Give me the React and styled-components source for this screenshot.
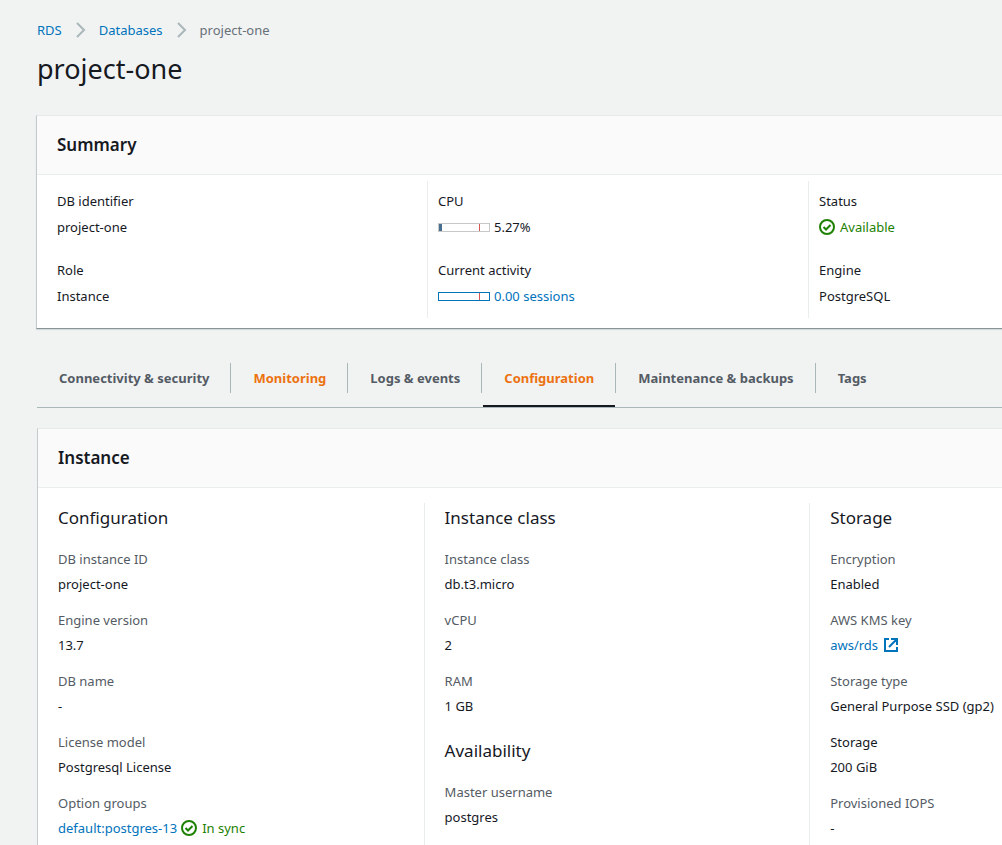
import React from "react";
import styled, { createGlobalStyle, css } from "styled-components";

const color = {
  page: "#f1f3f3",
  text: "#16191f",
  label: "#545b64",
  link: "#0073bb",
  success: "#1d8102",
  accent: "#ec7211",
  rule: "#aab7b8",
  divider: "#eaeded",
};

const GlobalStyle = createGlobalStyle`
  *, *::before, *::after { box-sizing: border-box; }
  body {
    margin: 0;
    background: ${color.page};
    color: ${color.text};
    font-family: "Noto Sans", "Open Sans", sans-serif;
    font-size: 13px;
    line-height: 20px;
    overflow-x: hidden;
  }
  h1, h2, h3, p, dl, dt, dd, ol { margin: 0; padding: 0; }
`;

const Page = styled.main`
  min-height: 100vh;
  padding: 20px 0 0 36px;
  display: flex;
  flex-direction: column;
`;

const Crumbs = styled.ol`
  display: flex;
  align-items: center;
  list-style: none;
  margin-left: 1px;
  li { display: flex; align-items: center; color: #687078; }
`;

const Chevron = styled.svg`
  width: 16px;
  height: 16px;
  margin: 0 10px 0 11px;
  fill: none;
  stroke: ${color.rule};
  stroke-width: 2;
`;

const Link = styled.a`
  color: ${color.link};
  text-decoration: none;
  &:hover { text-decoration: underline; }
`;

const Title = styled.h1`
  margin: 11px 0 28px 1px;
  font-size: 27px;
  line-height: 36px;
  font-weight: 400;
`;

const Panel = styled.section`
  background: #fff;
  border-top: 1px solid #e6e9e9;
  border-left: 1px solid #c3cbcc;
  ${(p) =>
    p.$fill
      ? css`
          flex: 1;
          display: flex;
          flex-direction: column;
          margin: 20px 0 0 1px;
        `
      : css`
          border-bottom: 1px solid #879596;
          box-shadow: 0 1px 1px #d5dbdb;
        `}
`;

const PanelHeader = styled.header`
  padding: 17px 20px;
  background: #fafafa;
  border-bottom: 1px solid ${color.divider};
  h2 { font-size: 17px; line-height: 24px; font-weight: 600; }
`;

const SummaryGrid = styled.div`
  display: grid;
  grid-template-columns: 55fr 55fr 28fr;
  padding: 6px 0 10px 9px;
`;

const SummaryColumn = styled.dl`
  display: flex;
  flex-direction: column;
  gap: 23px;
  min-width: 0;
  padding: 10px 10px 12px;
  border-left: 1px solid ${color.divider};
  &:first-child { border-color: transparent; }
`;

const SummaryItem = styled.div`
  display: grid;
  gap: 6px;
`;

const Value = styled.dd`
  display: flex;
  align-items: center;
  gap: 4px;
  white-space: nowrap;
`;

const Meter = styled.span`
  display: block;
  position: relative;
  width: 52px;
  height: 9px;
  border: 1px solid ${(p) => (p.$linked ? color.link : "#c8c8c8")};
  background: #fff;
  &::after {
    content: "";
    position: absolute;
    top: 0;
    bottom: 0;
    left: 80%;
    width: 1px;
    background: #d9534f;
  }
`;

const MeterFill = styled.span`
  display: block;
  height: 100%;
  background: #486f8f;
`;

const StatusText = styled.span`
  display: inline-flex;
  align-items: center;
  gap: 5px;
  color: ${color.success};
`;

const Icon = styled.svg`
  width: 16px;
  height: 16px;
  flex: none;
  fill: none;
  stroke: currentColor;
  stroke-width: 2;
`;

const ExternalLink = styled(Link)`
  display: inline-flex;
  align-items: center;
  gap: 5px;
`;

const Tabs = styled.div`
  display: flex;
  margin: 34px 0 0 1px;
  border-bottom: 1px solid ${color.rule};
`;

const Tab = styled.button`
  position: relative;
  height: 44px;
  padding: 0 22px 14px;
  border: 0;
  background: none;
  font: inherit;
  font-weight: 700;
  line-height: 30px;
  white-space: nowrap;
  color: ${(p) => (p.$accent ? color.accent : color.label)};
  cursor: pointer;
  &:not(:last-child)::before {
    content: "";
    position: absolute;
    top: 0;
    right: 0;
    width: 1px;
    height: 30px;
    background: ${color.rule};
  }
  &[aria-selected="true"]::after {
    content: "";
    position: absolute;
    left: 1px;
    right: 1px;
    bottom: 0;
    height: 2px;
    background: ${color.text};
  }
`;

const DetailGrid = styled.div`
  flex: 1;
  display: grid;
  grid-template-columns: 2fr 2fr 1fr;
  padding-top: 15px;
`;

const DetailColumn = styled.div`
  display: flex;
  flex-direction: column;
  gap: 23px;
  min-width: 0;
  padding: 3px 0 7px 20px;
  border-left: 1px solid ${color.divider};
  &:first-child { border-left: 0; }
`;

const Group = styled.section`
  h3 { margin-bottom: 19px; font-size: 17px; line-height: 24px; font-weight: 400; }
`;

const Fields = styled.dl`
  display: grid;
  gap: 16px;
`;

const Field = styled.div`
  display: grid;
  gap: 5px;
  dt { color: ${(p) => (p.$strong ? color.text : color.label)}; }
`;

const Separator = () => (
  <Chevron viewBox="0 0 16 16" aria-hidden="true">
    <path d="M4 1l7 7-7 7" />
  </Chevron>
);

const Status = ({ children }) => (
  <StatusText>
    <Icon viewBox="0 0 16 16" aria-hidden="true">
      <circle cx="8" cy="8" r="7" />
      <path d="M4.5 8l2.5 2.5L11.5 6" />
    </Icon>
    {children}
  </StatusText>
);

const UsageMeter = ({ percent, linked }) => (
  <Meter $linked={linked}>
    <MeterFill style={{ width: `${percent}%` }} />
  </Meter>
);

const summary = [
  [
    ["DB identifier", "project-one"],
    ["Role", "Instance"],
  ],
  [
    ["CPU", <><UsageMeter percent={5.27} />5.27%</>],
    ["Current activity", <><UsageMeter percent={0} linked /><Link href="#sessions">0.00 sessions</Link></>],
  ],
  [
    ["Status", <Status>Available</Status>],
    ["Engine", "PostgreSQL"],
  ],
];

const tabs = [
  { name: "Connectivity & security" },
  { name: "Monitoring", accent: true },
  { name: "Logs & events" },
  { name: "Configuration", accent: true, selected: true },
  { name: "Maintenance & backups" },
  { name: "Tags" },
];

const details = [
  [
    {
      title: "Configuration",
      fields: [
        ["DB instance ID", "project-one"],
        ["Engine version", "13.7"],
        ["DB name", "-"],
        ["License model", "Postgresql License"],
        ["Option groups", <><Link href="#option-group">default:postgres-13</Link><Status>In sync</Status></>],
      ],
    },
  ],
  [
    {
      title: "Instance class",
      fields: [
        ["Instance class", "db.t3.micro"],
        ["vCPU", "2"],
        ["RAM", "1 GB"],
      ],
    },
    { title: "Availability", fields: [["Master username", "postgres"]] },
  ],
  [
    {
      title: "Storage",
      fields: [
        ["Encryption", "Enabled"],
        [
          "AWS KMS key",
          <ExternalLink href="#kms">
            aws/rds
            <Icon viewBox="0 0 16 16" aria-hidden="true">
              <path d="M6 2H2v12h12v-4M8 2h6v6M14 2L6 10" />
            </Icon>
          </ExternalLink>,
        ],
        ["Storage type", "General Purpose SSD (gp2)"],
        ["Storage", "200 GiB", true],
        ["Provisioned IOPS", "-"],
      ],
    },
  ],
];

export default function App() {
  return (
    <>
      <GlobalStyle />
      <Page>
        <nav aria-label="Breadcrumb">
          <Crumbs>
            <li><Link href="#rds">RDS</Link><Separator /></li>
            <li><Link href="#databases">Databases</Link><Separator /></li>
            <li aria-current="page">project-one</li>
          </Crumbs>
        </nav>
        <Title>project-one</Title>

        <Panel>
          <PanelHeader><h2>Summary</h2></PanelHeader>
          <SummaryGrid>
            {summary.map((items, i) => (
              <SummaryColumn key={i}>
                {items.map(([label, value]) => (
                  <SummaryItem key={label}>
                    <dt>{label}</dt>
                    <Value>{value}</Value>
                  </SummaryItem>
                ))}
              </SummaryColumn>
            ))}
          </SummaryGrid>
        </Panel>

        <Tabs role="tablist">
          {tabs.map((t) => (
            <Tab key={t.name} type="button" role="tab" aria-selected={!!t.selected} $accent={t.accent}>
              {t.name}
            </Tab>
          ))}
        </Tabs>

        <Panel $fill>
          <PanelHeader><h2>Instance</h2></PanelHeader>
          <DetailGrid>
            {details.map((groups, i) => (
              <DetailColumn key={i}>
                {groups.map((g) => (
                  <Group key={g.title}>
                    <h3>{g.title}</h3>
                    <Fields>
                      {g.fields.map(([label, value, strong]) => (
                        <Field key={label} $strong={strong}>
                          <dt>{label}</dt>
                          <Value>{value}</Value>
                        </Field>
                      ))}
                    </Fields>
                  </Group>
                ))}
              </DetailColumn>
            ))}
          </DetailGrid>
        </Panel>
      </Page>
    </>
  );
}
